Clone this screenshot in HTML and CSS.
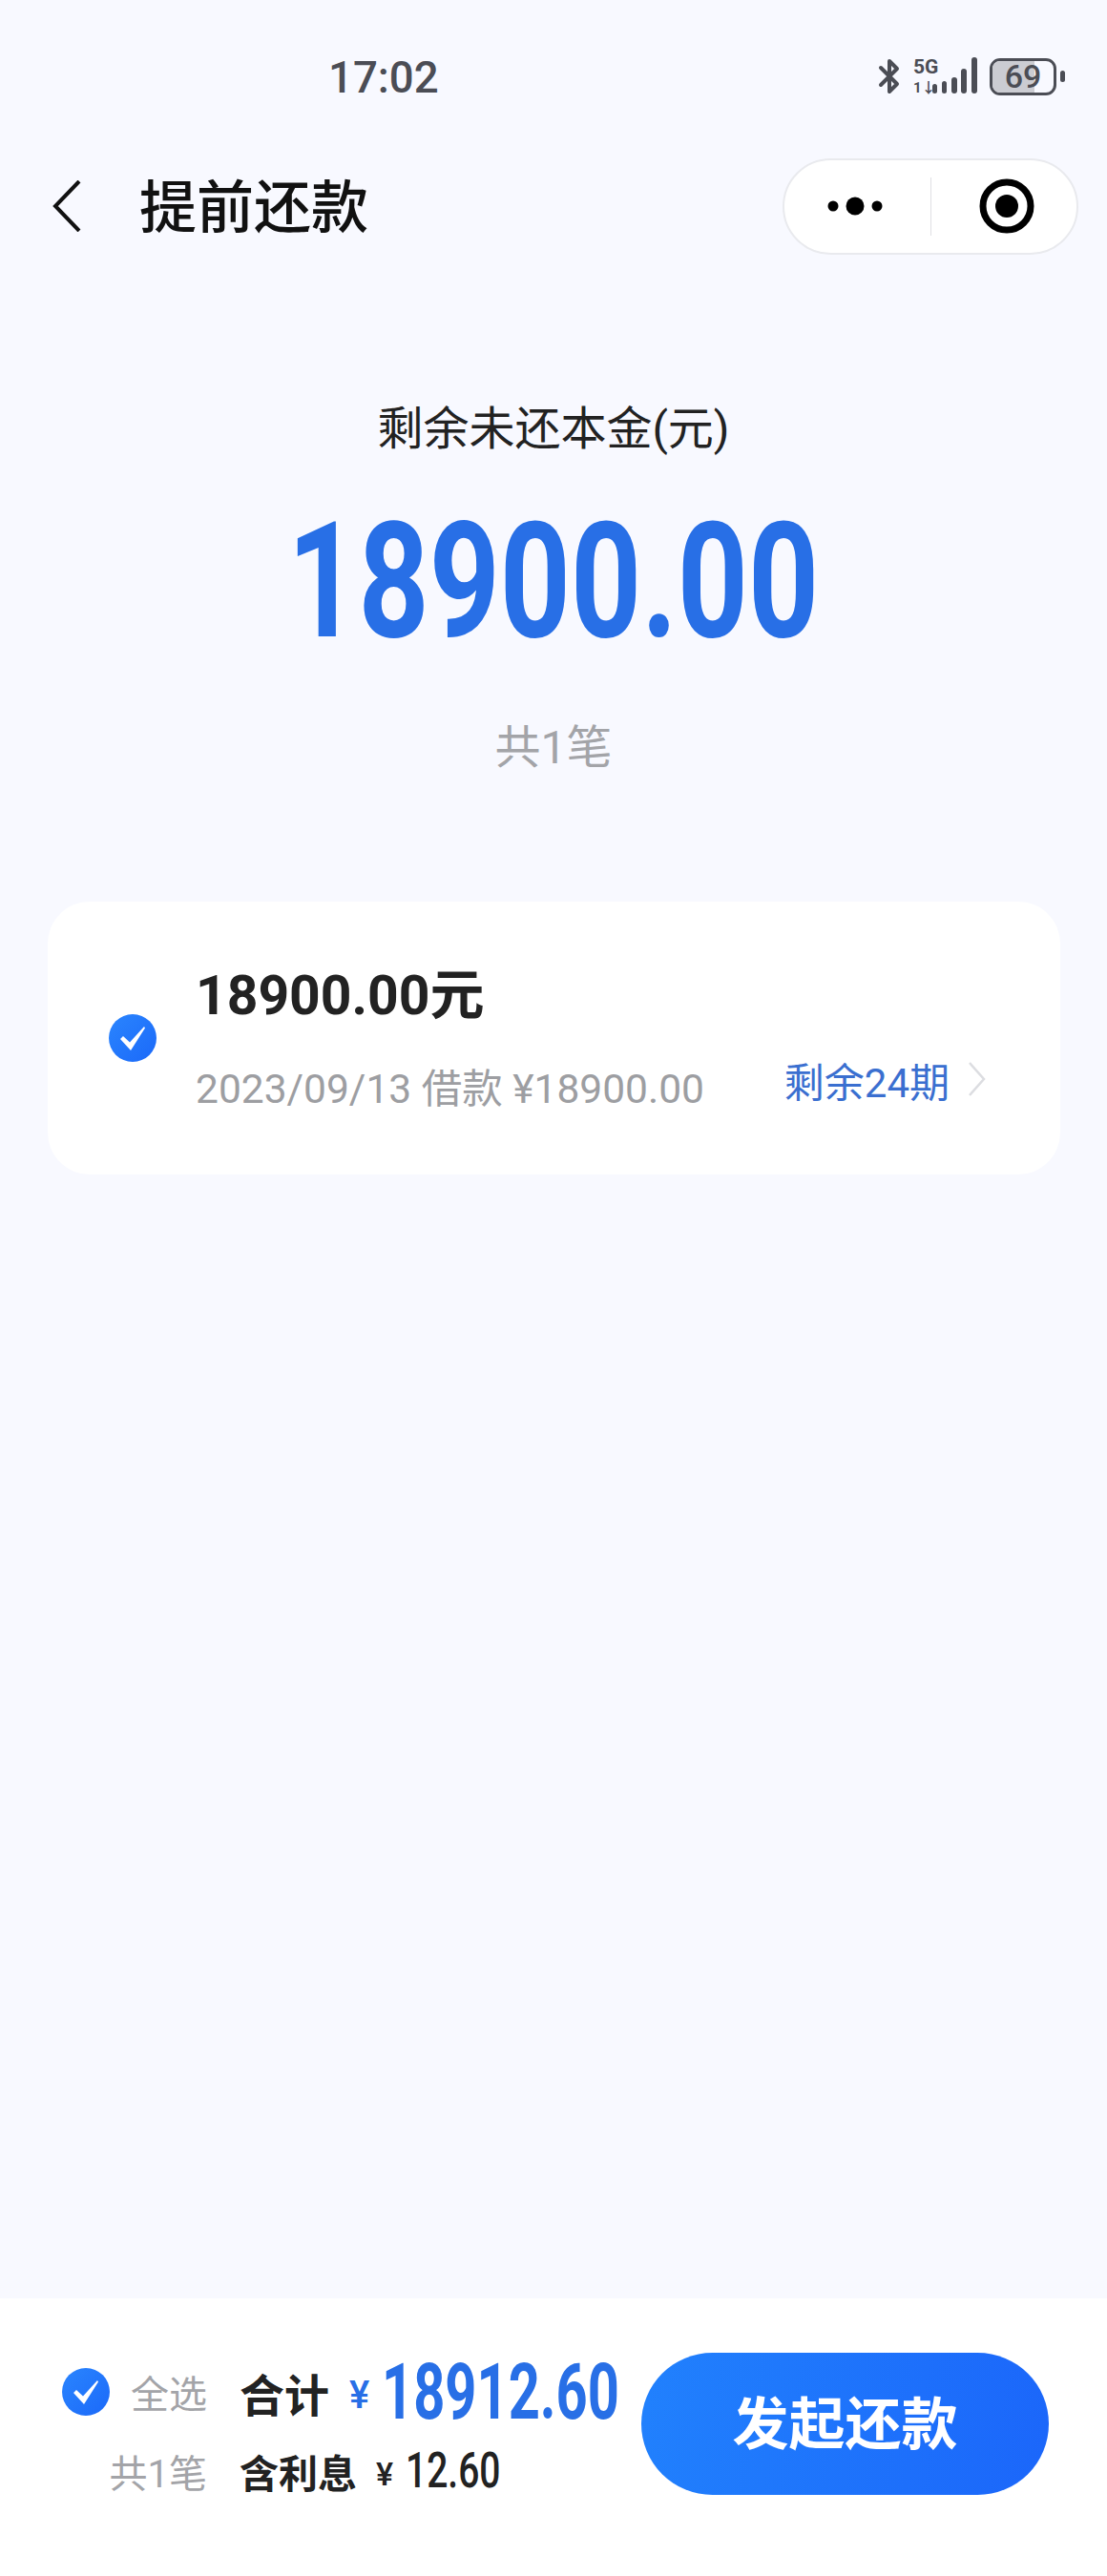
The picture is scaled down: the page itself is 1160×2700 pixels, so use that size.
FILE: index.html
```html
<!DOCTYPE html>
<html lang="zh-CN">
<head>
  <meta charset="UTF-8">
  <meta name="viewport" content="width=device-width, initial-scale=1.0">
  <title>提前还款</title>
  <link rel="stylesheet" href="styles.css">
</head>
<body>
  <div class="page">
    <div class="statusbar">
      <span class="time">17:02</span>
      <div class="status-icons">
        <svg class="bt" width="24" height="38" viewBox="0 0 24 38" fill="none" stroke="#4b4d55" stroke-width="4" stroke-linejoin="round" stroke-linecap="round">
          <path d="M3 10 L20 27 L12 35 V3 L20 11 L3 28"/>
        </svg>
        <svg class="signal" width="72" height="48" viewBox="0 -4 72 48">
          <text class="net" x="0" y="17">5G</text>
          <text class="net-sub" x="0" y="37">1↓</text>
          <g fill="#4b4d55">
            <rect x="20" y="28" width="5" height="10" rx="2.5"/>
            <rect x="30" y="25" width="5" height="13" rx="2.5"/>
            <rect x="40" y="21" width="6" height="17" rx="3"/>
            <rect x="50" y="12" width="6" height="26" rx="3"/>
            <rect x="61" y="0" width="6" height="38" rx="3"/>
          </g>
        </svg>
        <div class="battery">
          <div class="battery-body"><div class="battery-fill"></div><span class="battery-num">69</span></div>
          <div class="battery-nub"></div>
        </div>
      </div>
    </div>

    <div class="navbar">
      <svg class="back" width="30" height="54" viewBox="0 0 30 54" fill="none" stroke="#111" stroke-width="4">
        <path d="M28 1 L3 27 L28 53"/>
      </svg>
      <h1 class="title">提前还款</h1>
      <div class="capsule">
        <svg class="capsule-more" width="58" height="24" viewBox="0 0 58 24" fill="#000">
          <circle cx="6" cy="12" r="5.5"/>
          <circle cx="29" cy="12" r="9.5"/>
          <circle cx="52" cy="12" r="5.5"/>
        </svg>
        <div class="capsule-line"></div>
        <svg class="capsule-close" width="60" height="60" viewBox="0 0 60 60">
          <circle cx="30" cy="30" r="25" fill="none" stroke="#000" stroke-width="7"/>
          <circle cx="30" cy="30" r="12" fill="#000"/>
        </svg>
      </div>
    </div>

    <div class="summary">
      <div class="summary-label">剩余未还本金(元)</div>
      <div class="summary-amount">18900.00</div>
      <div class="summary-count">共1笔</div>
    </div>

    <div class="loan-card">
      <div class="check check-card">
        <svg width="50" height="50" viewBox="0 0 50 50"><path fill="#fff" d="M12 26 L15 23 L22 29.5 L37 13 L38 14.5 L23 38 Z"/></svg>
      </div>
      <div class="loan-body">
        <div class="loan-title">18900.00元</div>
        <div class="loan-row">
          <span class="loan-sub">2023/09/13 借款 ¥18900.00</span>
          <span class="loan-term">剩余24期
            <svg width="18" height="36" viewBox="0 0 18 36" fill="none" stroke="#dcdde1" stroke-width="2.5"><path d="M1 1 L16 18 L1 35"/></svg>
          </span>
        </div>
      </div>
    </div>

    <div class="footer">
      <div class="totals">
        <div class="totals-left">
          <div class="check check-all">
            <svg width="50" height="50" viewBox="0 0 50 50"><path fill="#fff" d="M12 26 L15 23 L22 29.5 L37 13 L38 14.5 L23 38 Z"/></svg>
          </div>
          <span class="muted">全选</span>
        </div>
        <div class="totals-right">
          <span class="total-label">合计</span>
          <span class="yen yen-blue">¥</span>
          <span class="total-amount">18912.60</span>
        </div>
        <div class="totals-left">
          <span class="muted">共1笔</span>
        </div>
        <div class="totals-right">
          <span class="interest-label">含利息</span>
          <span class="yen yen-dark">¥</span>
          <span class="interest-amount">12.60</span>
        </div>
      </div>
      <button class="pay-btn" type="button">发起还款</button>
    </div>
  </div>
</body>
</html>
```

FILE: styles.css
```css
* { box-sizing: border-box; }
body {
  margin: 0;
  background-color: #f8f9ff;
  font-family: Roboto, "Noto Sans CJK SC", sans-serif;
  color: #222;
}
.page {
  display: flex;
  flex-direction: column;
  height: 2700px;
  overflow: hidden;
}

/* status bar */
.statusbar {
  display: flex;
  align-items: center;
  justify-content: space-between;
  height: 160px;
  padding: 0 44px 0 344px;
}
.time { font-size: 47px; font-weight: 500; color: #4b4d55; transform: scaleX(0.97); transform-origin: left center; }
.status-icons { display: flex; align-items: center; }
.bt { margin-right: 13px; }
.signal { margin-right: 8px; }
.net { font-size: 21px; font-weight: 700; fill: #4b4d55; }
.net-sub { font-size: 15px; font-weight: 700; fill: #4b4d55; }
.battery { display: flex; align-items: center; gap: 4px; }
.battery-body {
  position: relative;
  display: flex;
  align-items: center;
  justify-content: center;
  width: 70px;
  height: 39px;
  border: 3px solid #4b4d55;
  border-radius: 11px;
  overflow: hidden;
}
.battery-fill {
  position: absolute;
  left: 0;
  top: 0;
  bottom: 0;
  width: 69%;
  background-color: #cbccd2;
}
.battery-num { position: relative; font-size: 34px; font-weight: 500; color: #4b4d55; line-height: 33px; }
.battery-nub { width: 5px; height: 12px; border-radius: 3px; background-color: #4b4d55; }

/* nav */
.navbar {
  display: flex;
  align-items: center;
  height: 112px;
  padding: 0 30px 0 55px;
}
.title { flex: 1; margin: 5px 0 0 61px; font-size: 60px; font-weight: 500; color: #111; line-height: 1; }
.capsule {
  display: flex;
  align-items: center;
  width: 310px;
  height: 101px;
  background-color: #fff;
  border: 2px solid #e9eaee;
  border-radius: 51px;
}
.capsule-more { margin-left: 45px; }
.capsule-line { width: 1px; height: 61px; margin-left: 50px; background-color: #dfe0e4; }
.capsule-close { margin-left: 49px; }

/* summary */
.summary { display: flex; flex-direction: column; align-items: center; margin-top: 148px; }
.summary-label { font-size: 48px; line-height: 60px; color: #222; }
.summary-amount {
  margin-top: 50px;
  font-size: 168px;
  line-height: 160px;
  font-weight: 700;
  color: #286fe6;
  transform: scaleX(0.77);
}
.summary-count { margin-top: 64px; font-size: 48px; line-height: 60px; color: #a3a4a8; }

/* loan card */
.loan-card {
  display: flex;
  align-items: center;
  height: 286px;
  margin: 131px 49px 0 50px;
  padding: 0 78px 0 64px;
  background-color: #fff;
  border-radius: 44px;
}
.check {
  flex: none;
  width: 50px;
  height: 50px;
  border-radius: 50%;
  background: linear-gradient(135deg, #2a85fe, #1b69f9);
}
.check svg { display: block; }
.loan-body { flex: 1; margin-left: 41px; }
.loan-title { font-size: 57px; line-height: 70px; font-weight: 700; color: #222; }
.loan-row { display: flex; align-items: center; justify-content: space-between; margin-top: 28px; height: 60px; }
.loan-sub { font-size: 42.5px; color: #9d9ea2; }
.loan-term { display: flex; align-items: center; gap: 20px; padding-bottom: 12px; font-size: 42px; color: #3a6fd0; }

/* footer */
.footer {
  display: flex;
  align-items: flex-start;
  justify-content: space-between;
  margin-top: auto;
  height: 291px;
  padding: 57px 61px 0 65px;
  background-color: #fff;
}
.totals {
  display: grid;
  grid-template-columns: 152px auto;
  grid-template-rows: 70px 50px;
  row-gap: 23px;
  column-gap: 34px;
  margin-top: 6px;
}
.totals-left { display: flex; align-items: center; justify-content: space-between; }
.totals-left .muted:only-child { margin-left: auto; }
.totals-right { display: flex; align-items: center; }
.muted { font-size: 40px; color: #a3a4a8; }
.total-label { font-size: 47px; font-weight: 700; color: #222; }
.yen { font-weight: 500; }
.yen-blue { margin-left: 21px; margin-top: 6px; font-size: 40px; color: #286fe6; }
.total-amount {
  width: 245px;
  margin-left: 13px;
  font-size: 82px;
  line-height: 70px;
  font-weight: 700;
  color: #286fe6;
  white-space: nowrap;
  transform: scaleX(0.705);
  transform-origin: left center;
}
.interest-label { font-size: 41px; font-weight: 700; color: #222; }
.yen-dark { margin-left: 20px; margin-top: 6px; font-size: 34px; color: #222; }
.interest-amount {
  width: 95px;
  margin-left: 13px;
  font-size: 52px;
  line-height: 50px;
  font-weight: 500;
  color: #222;
  white-space: nowrap;
  transform: scaleX(0.75);
  transform-origin: left center;
}
.pay-btn {
  width: 427px;
  height: 149px;
  padding: 0 0 8px;
  border: none;
  border-radius: 75px;
  background: linear-gradient(100deg, #2181fd, #1b66fa);
  color: #fff;
  font-family: inherit;
  font-size: 59px;
  font-weight: 700;
}
```
